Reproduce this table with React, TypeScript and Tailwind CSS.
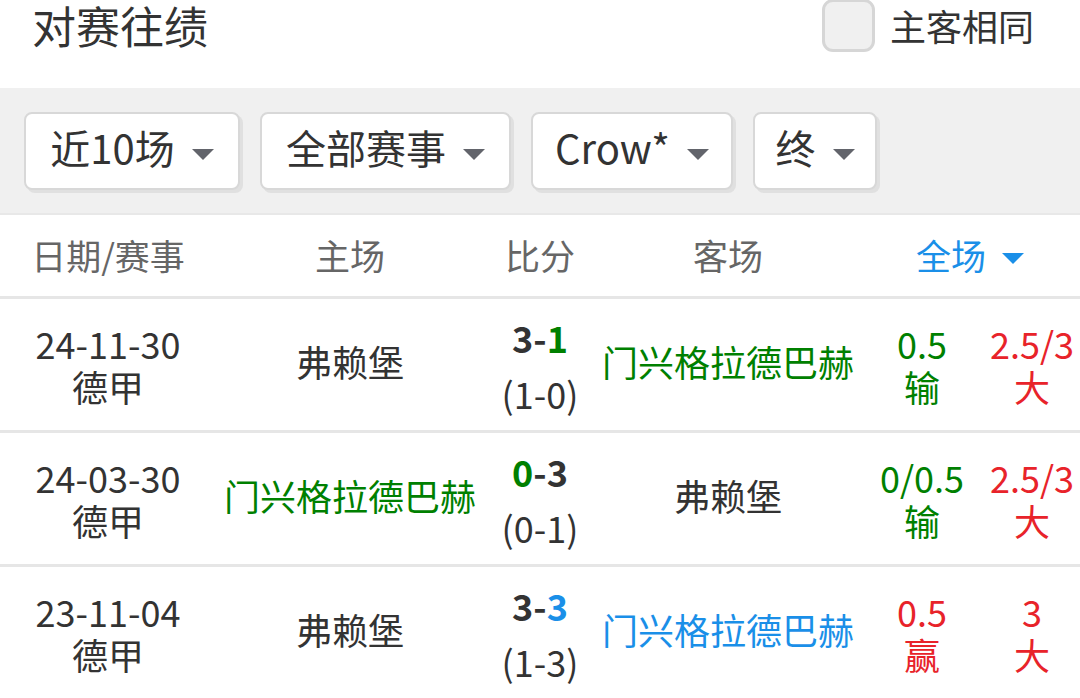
import React from 'react';

const FONT = { fontFamily: '"Noto Sans CJK SC", "Noto Sans", sans-serif' };

const GREEN = 'text-[#008000]';
const RED = 'text-[#e8232a]';
const BLUE = 'text-[#1a8fe8]';
const DARK = 'text-[#333333]';

const Caret = ({ color = '#62646b', className = '' }: { color?: string; className?: string }) => (
  <svg width="22" height="11" viewBox="0 0 22 11" className={`shrink-0 ${className}`}>
    <polygon points="0,0 22,0 11,11" fill={color} />
  </svg>
);

const filters = [
  { label: '近10场', w: 'w-[216px]' },
  { label: '全部赛事', w: 'w-[251px]' },
  { label: 'Crow*', w: 'w-[202px]' },
  { label: '终', w: 'w-[124px]' },
];

type Part = { t: string; c: string };
type Row = {
  date: string;
  league: string;
  home: Part;
  score: Part[];
  half: string;
  away: Part;
  hcap: [string, string, string];
  ou: [string, string, string];
};

const rows: Row[] = [
  {
    date: '24-11-30',
    league: '德甲',
    home: { t: '弗赖堡', c: DARK },
    score: [{ t: '3-', c: DARK }, { t: '1', c: GREEN }],
    half: '(1-0)',
    away: { t: '门兴格拉德巴赫', c: GREEN },
    hcap: ['0.5', '输', GREEN],
    ou: ['2.5/3', '大', RED],
  },
  {
    date: '24-03-30',
    league: '德甲',
    home: { t: '门兴格拉德巴赫', c: GREEN },
    score: [{ t: '0', c: GREEN }, { t: '-3', c: DARK }],
    half: '(0-1)',
    away: { t: '弗赖堡', c: DARK },
    hcap: ['0/0.5', '输', GREEN],
    ou: ['2.5/3', '大', RED],
  },
  {
    date: '23-11-04',
    league: '德甲',
    home: { t: '弗赖堡', c: DARK },
    score: [{ t: '3-', c: DARK }, { t: '3', c: BLUE }],
    half: '(1-3)',
    away: { t: '门兴格拉德巴赫', c: BLUE },
    hcap: ['0.5', '赢', RED],
    ou: ['3', '大', RED],
  },
];

const MatchRow = ({ r }: { r: Row }) => (
  <div className="flex h-[134px] border-b-[3px] border-[#e6e6e6] text-[36px]">
    <div className="w-[216px] flex flex-col items-center justify-center leading-[43px] text-[#333333]">
      <span>{r.date}</span>
      <span>{r.league}</span>
    </div>
    <div className={`w-[268px] flex items-center justify-center pb-[8px] ${r.home.c}`}>{r.home.t}</div>
    <div className="w-[112px] flex flex-col items-center justify-center text-[#333333]">
      <span className="font-bold leading-[44px]">
        {r.score.map((p, i) => (
          <span key={i} className={p.c}>{p.t}</span>
        ))}
      </span>
      <span className="leading-[44px] mt-[12px]">{r.half}</span>
    </div>
    <div className={`w-[264px] flex items-center justify-center pb-[8px] ${r.away.c}`}>{r.away.t}</div>
    <div className={`w-[124px] flex flex-col items-center justify-center leading-[43px] ${r.hcap[2]}`}>
      <span>{r.hcap[0]}</span>
      <span>{r.hcap[1]}</span>
    </div>
    <div className={`w-[96px] flex flex-col items-center justify-center leading-[43px] ${r.ou[2]}`}>
      <span>{r.ou[0]}</span>
      <span>{r.ou[1]}</span>
    </div>
  </div>
);

export default function App() {
  return (
    <div style={FONT} className="w-[1080px] h-[698px] overflow-hidden bg-white text-[#333333]">
      <div className="h-[88px] flex items-start justify-between pl-[32px] pr-[46px]">
        <h2 className="text-[44px] leading-[50px] font-normal">对赛往绩</h2>
        <label className="flex items-start gap-[15px]">
          <span className="w-[53px] h-[53px] rounded-[11px] border-[3px] border-[#d6d6d6] bg-[#f0f0f0] -mt-[1px]" />
          <span className="text-[36px] leading-[50px]">主客相同</span>
        </label>
      </div>

      <div className="h-[125px] bg-[#f0f0f0] flex gap-[20px] pl-[24px] pt-[24px]">
        {filters.map((f) => (
          <div
            key={f.label}
            className={`${f.w} h-[78px] flex items-center justify-center gap-[17px] bg-white border-2 border-[#d8d8d8] rounded-[8px] shadow-[3px_3px_0_0_#e0e0e0] text-[40px] text-[#333333]`}
          >
            <span className="mb-[8px]">{f.label}</span>
            <Caret className="mt-[6px]" />
          </div>
        ))}
      </div>

      <div className="flex h-[86px] items-center border-t-2 border-[#e8e8e8] border-b-[3px] border-b-[#e6e6e6] text-[35px] text-[#666666]">
        <div className="w-[216px] text-center">日期/赛事</div>
        <div className="w-[268px] text-center">主场</div>
        <div className="w-[112px] text-center">比分</div>
        <div className="w-[264px] text-center">客场</div>
        <div className={`w-[220px] flex items-center justify-center gap-[16px] ${BLUE}`}>
          <span>全场</span>
          <Caret color="#1a8fe8" className="mt-[6px]" />
        </div>
      </div>

      {rows.map((r) => (
        <MatchRow key={r.date} r={r} />
      ))}
    </div>
  );
}
